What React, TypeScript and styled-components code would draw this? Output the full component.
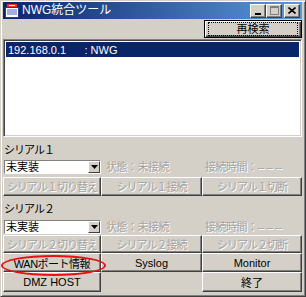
import React from 'react';
import styled, { createGlobalStyle } from 'styled-components';

const FONT = `"Liberation Sans", "Noto Sans CJK JP", sans-serif`;

const GlobalStyle = createGlobalStyle`
  html, body { margin: 0; padding: 0; background: #D4D0C8; }
  body { font-family: ${FONT}; font-size: 11px; }
  * { box-sizing: border-box; }
`;

const Window = styled.div`
  position: relative;
  width: 306px;
  height: 297px;
  background: #D4D0C8;
  border: 1px solid;
  border-color: #D4D0C8 #404040 #404040 #D4D0C8;
  box-shadow: inset 1px 1px #fff, inset -1px -1px #808080;
  padding: 1px 3px 4px 2px;
  display: flex;
  flex-direction: column;
`;

const TitleBar = styled.div`
  height: 17px;
  display: flex;
  align-items: center;
  padding: 0 2px 0 2px;
  background: linear-gradient(to right, #0A246A, #5C98DE);
  color: #fff;
`;

const TitleText = styled.span`
  flex: 1;
  margin-left: 3px;
  font-size: 12px;
  line-height: 17px;
  white-space: nowrap;
`;

const CapButtons = styled.div`
  display: flex;
  align-items: center;
`;

const CapButton = styled.div<{ $gap?: number }>`
  width: 16px;
  height: 14px;
  margin-left: ${p => p.$gap ?? 0}px;
  background: #D4D0C8;
  border: 1px solid;
  border-color: #fff #404040 #404040 #fff;
  box-shadow: inset -1px -1px #808080;
  display: flex;
  align-items: center;
  justify-content: center;
`;

const TopRow = styled.div`
  display: flex;
  justify-content: flex-end;
  padding-top: 1px;
  height: 19px;
`;

const DefaultButton = styled.button`
  width: 98px;
  height: 18px;
  margin: 0;
  padding: 1px 3px;
  background: #D4D0C8;
  border: 1px solid #000;
  box-shadow: inset 1px 1px #fff, inset -1px -1px #404040, inset -2px -2px #808080;
  font: 11px ${FONT};
  color: #000;
  display: flex;
`;

const FocusRect = styled.span`
  flex: 1;
  border: 1px dotted #000;
  display: flex;
  align-items: center;
  justify-content: center;
  line-height: 1;
`;

const ListBox = styled.div`
  margin-top: 1px;
  height: 99px;
  background: #fff;
  border: 1px solid;
  border-color: #808080 #fff #fff #808080;
  box-shadow: inset 1px 1px #404040, inset -1px -1px #D4D0C8;
  padding: 2px 2px;
`;

const ListRow = styled.div<{ $selected?: boolean }>`
  height: 15px;
  display: flex;
  align-items: center;
  padding-left: 2px;
  background: ${p => (p.$selected ? '#0A246A' : 'transparent')};
  color: ${p => (p.$selected ? '#fff' : '#000')};
  font-size: 11px;
  white-space: pre;
`;

const SectionLabel = styled.div<{ $h: number }>`
  height: ${p => p.$h}px;
  display: flex;
  align-items: center;
  padding-left: 1px;
  padding-top: 2px;
  font-size: 11px;
  letter-spacing: -1px;
  color: #000;
`;

const Grid3 = styled.div<{ $h: number; $mt?: number }>`
  display: grid;
  grid-template-columns: 98px 101px 100px;
  height: ${p => p.$h}px;
  margin-top: ${p => p.$mt ?? 0}px;
  align-items: stretch;
`;

const Combo = styled.div`
  margin-left: 1px;
  height: 14px;
  background: #fff;
  border: 1px solid;
  border-color: #808080 #fff #fff #808080;
  display: flex;
  align-items: stretch;
`;

const ComboText = styled.span`
  flex: 1;
  padding-left: 1px;
  font-size: 11px;
  line-height: 12px;
  color: #000;
`;

const ComboArrow = styled.span`
  width: 12px;
  background: #D4D0C8;
  border: 1px solid;
  border-color: #fff #404040 #404040 #fff;
  display: flex;
  align-items: center;
  justify-content: center;
`;

const Status = styled.span<{ $pl: number }>`
  padding-left: ${p => p.$pl}px;
  font-size: 11px;
  line-height: 14px;
  letter-spacing: -0.5px;
  color: #a4a4a4;
  text-shadow: 1px 1px #fff;
  white-space: pre;
`;

const Btn = styled.button<{ $disabled?: boolean; $ls?: number }>`
  margin: 0;
  padding: 0;
  background: #D4D0C8;
  border: 1px solid;
  border-color: #fff #404040 #404040 #fff;
  box-shadow: inset -1px -1px #808080;
  font: 11px ${FONT};
  letter-spacing: ${p => p.$ls ?? 0}px;
  color: ${p => (p.$disabled ? '#a4a4a4' : '#000')};
  text-shadow: ${p => (p.$disabled ? '1px 1px #fff' : 'none')};
  white-space: nowrap;
  overflow: hidden;
`;

const Blank = styled.div``;

const Ellipse = styled.div`
  position: absolute;
  left: 0;
  top: 254px;
  width: 105px;
  height: 21px;
  border: 2px solid #e81010;
  border-radius: 50%;
  pointer-events: none;
`;

const AppIcon = () => (
  <svg width="14" height="14" viewBox="0 0 14 14">
    <rect x="0.5" y="3.5" width="13" height="10" fill="#fff" stroke="#2a3a8a" />
    <path d="M2 6h10M2 8h10M2 10h10" stroke="#4060c0" strokeWidth="1" />
    <rect x="2" y="0" width="10" height="3" fill="#e83030" />
    <rect x="4" y="1" width="6" height="1" fill="#fff" />
  </svg>
);

const Arrow = () => (
  <svg width="7" height="4" viewBox="0 0 7 4">
    <path d="M0 0h7L3.5 4z" fill="#000" />
  </svg>
);

export default function App() {
  return (
    <>
      <GlobalStyle />
      <Window>
        <TitleBar>
          <AppIcon />
          <TitleText>NWG統合ツール</TitleText>
          <CapButtons>
            <CapButton>
              <svg width="8" height="8" viewBox="0 0 8 8"><rect x="1" y="6" width="6" height="2" fill="#000" /></svg>
            </CapButton>
            <CapButton>
              <svg width="9" height="9" viewBox="0 0 9 9">
                <rect x="0.5" y="0.5" width="8" height="8" fill="none" stroke="#808080" />
                <rect x="0" y="1" width="9" height="1" fill="#808080" />
              </svg>
            </CapButton>
            <CapButton $gap={2}>
              <svg width="8" height="7" viewBox="0 0 8 7">
                <path d="M0.5 0.5l7 6M7.5 0.5l-7 6" stroke="#000" strokeWidth="1.6" />
              </svg>
            </CapButton>
          </CapButtons>
        </TitleBar>

        <TopRow>
          <DefaultButton>
            <FocusRect>再検索</FocusRect>
          </DefaultButton>
        </TopRow>

        <ListBox>
          <ListRow $selected>{'192.168.0.1      : NWG'}</ListRow>
        </ListBox>

        <SectionLabel $h={21}>シリアル１</SectionLabel>
        <Grid3 $h={14} $mt={2}>
          <Combo>
            <ComboText>未実装</ComboText>
            <ComboArrow><Arrow /></ComboArrow>
          </Combo>
          <Status $pl={5}>状態：未接続</Status>
          <Status $pl={3}>接続時間：-- -- --</Status>
        </Grid3>
        <Grid3 $h={19} $mt={3}>
          <Btn $disabled $ls={-1}>シリアル１切り替え</Btn>
          <Btn $disabled $ls={-1}>シリアル１接続</Btn>
          <Btn $disabled $ls={-1}>シリアル１切断</Btn>
        </Grid3>

        <SectionLabel $h={22}>シリアル２</SectionLabel>
        <Grid3 $h={14} $mt={2}>
          <Combo>
            <ComboText>未実装</ComboText>
            <ComboArrow><Arrow /></ComboArrow>
          </Combo>
          <Status $pl={5}>状態：未接続</Status>
          <Status $pl={3}>接続時間：-- -- --</Status>
        </Grid3>
        <Grid3 $h={19} $mt={1}>
          <Btn $disabled $ls={-1}>シリアル２切り替え</Btn>
          <Btn $disabled $ls={-1}>シリアル２接続</Btn>
          <Btn $disabled $ls={-1}>シリアル２切断</Btn>
        </Grid3>
        <Grid3 $h={19}>
          <Btn $ls={-0.5}>WANポート情報</Btn>
          <Btn>Syslog</Btn>
          <Btn>Monitor</Btn>
        </Grid3>
        <Grid3 $h={20}>
          <Btn>DMZ HOST</Btn>
          <Blank />
          <Btn>終了</Btn>
        </Grid3>
        <Ellipse />
      </Window>
    </>
  );
}
